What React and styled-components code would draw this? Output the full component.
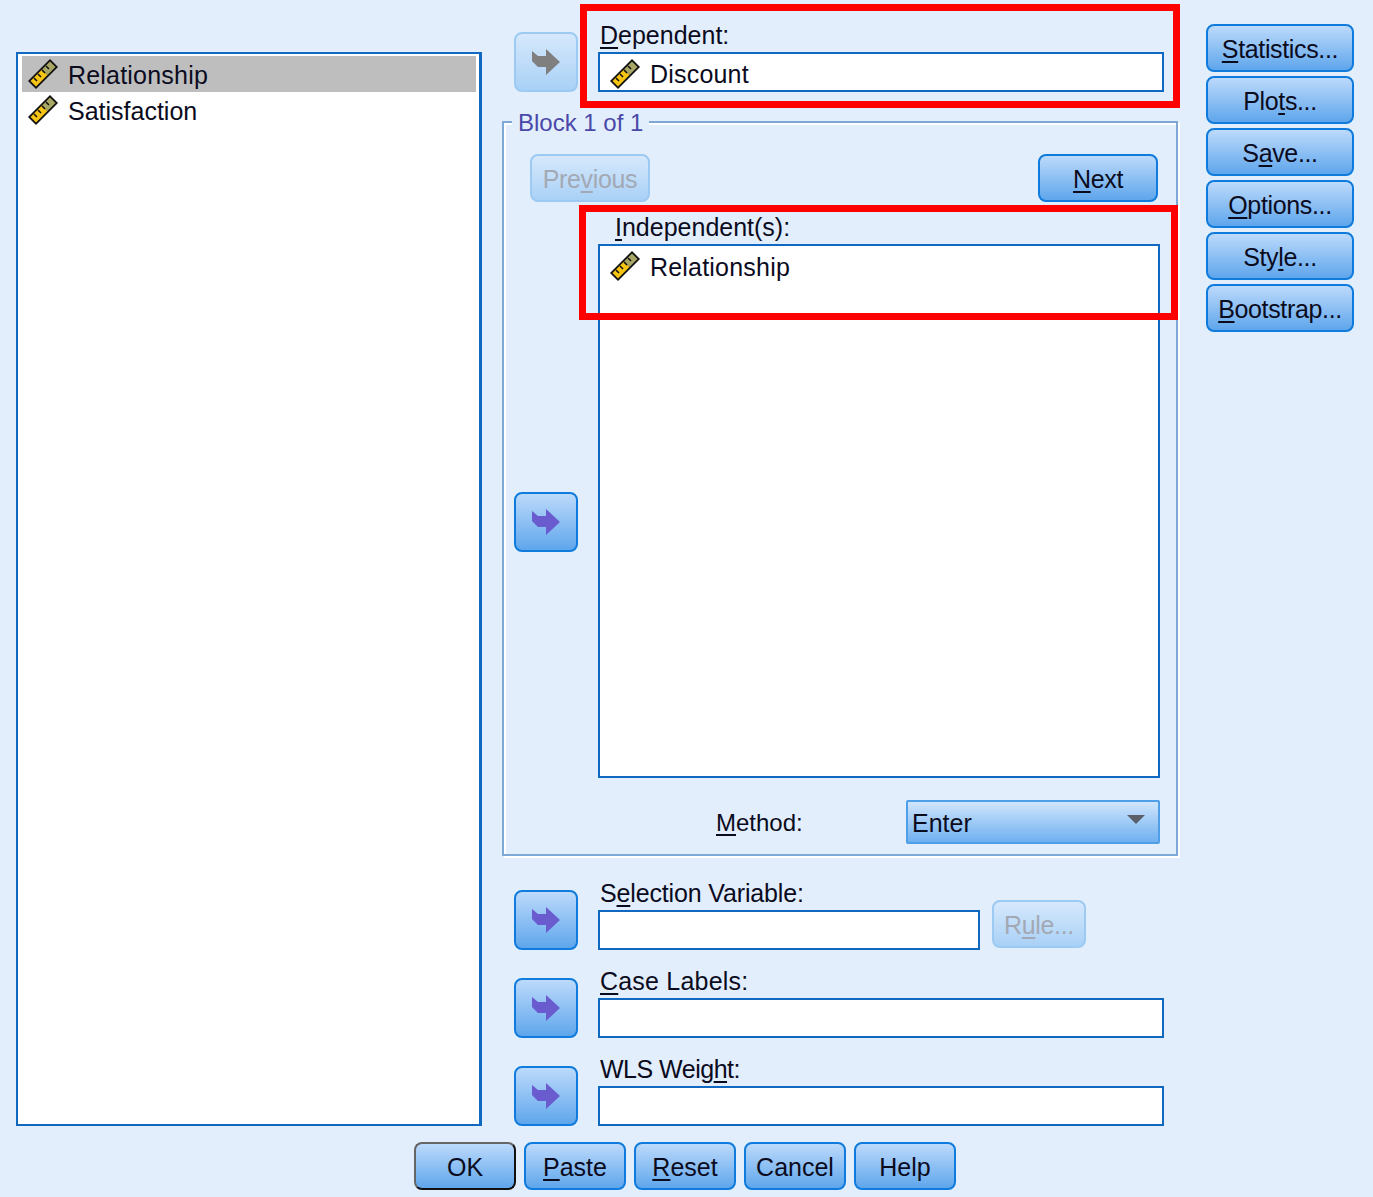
import React from "react";
import styled, { createGlobalStyle } from "styled-components";

const Global = createGlobalStyle`
  html, body { margin: 0; padding: 0; background: #e2eefb; }
  body { font-family: "Liberation Sans", Arial, sans-serif; font-size: 25px; color: #0b0b1e; }
`;

const Page = styled.div`
  position: relative;
  width: 1373px;
  height: 1197px;
  overflow: hidden;
  background: #e2eefb;
`;

const Top = styled.div`
  display: flex;
  align-items: flex-start;
  padding-left: 16px;
`;

const VarList = styled.div`
  box-sizing: border-box;
  width: 466px;
  height: 1074px;
  margin-top: 52px;
  padding: 2px 3px 2px 4px;
  background: #fff;
  border: 3px solid #1068c0;
  border-width: 2px 3px 2px 2px;
`;

const VarRow = styled.div`
  display: flex;
  align-items: center;
  gap: 8px;
  height: 36px;
  padding-left: 5px;
  background: ${({ selected }) => (selected ? "#bebebe" : "transparent")};
`;

const VarText = styled.span`
  position: relative;
  top: 1px;
  margin-left: 1px;
  letter-spacing: ${({ name }) => (name === "Satisfaction" ? "0" : "0.2px")};
`;

const Middle = styled.div`
  width: 676px;
  margin-left: 20px;
  padding-top: 24px;
`;

const FieldRow = styled.div`
  display: flex;
  align-items: flex-end;
  gap: 20px;
  height: 68px;
  padding-left: 12px;
  margin-top: ${({ top }) => top ?? 20}px;
`;

const Field = styled.div`
  width: ${({ width }) => width}px;
`;

const FieldLabel = styled.div`
  height: 28px;
  padding-left: 2px;
  line-height: 22px;
  white-space: nowrap;
  letter-spacing: ${({ spacing }) => spacing || 0}px;
`;

const Input = styled.div`
  box-sizing: border-box;
  display: flex;
  align-items: center;
  gap: 8px;
  height: 40px;
  padding: 3px 0 0 9px;
  background: #fff;
  border: 2px solid #1068c0;
`;

const ArrowButton = styled.div`
  box-sizing: border-box;
  flex: none;
  display: flex;
  align-items: center;
  justify-content: center;
  width: 64px;
  height: 60px;
  margin-top: ${({ top }) => top || 0}px;
  border-radius: 8px;
  border: 2px solid ${({ disabled }) => (disabled ? "#9ccaf2" : "#0f7bdc")};
  background: ${({ disabled }) =>
    disabled
      ? "linear-gradient(#d6e8fc, #a9d1f6)"
      : "linear-gradient(#bcdafb, #5fa6ec)"};
`;

const Group = styled.div`
  position: relative;
  box-sizing: border-box;
  height: 735px;
  margin-top: 29px;
  padding: 31px 16px 10px 10px;
  border: 2px solid #7ea8d6;
  box-shadow: inset 2px 2px 0 #fff, 2px 2px 0 #fff;
`;

const Legend = styled.div`
  position: absolute;
  left: 8px;
  top: -14px;
  padding: 0 6px;
  font-size: 24px;
  line-height: 28px;
  background: #e2eefb;
  color: #4a48a8;
`;

const NavRow = styled.div`
  display: flex;
  justify-content: space-between;
  padding: 0 2px 0 16px;
`;

const Button = styled.div`
  box-sizing: border-box;
  flex: none;
  display: flex;
  align-items: center;
  justify-content: center;
  width: ${({ width }) => width || 148}px;
  height: 48px;
  padding-top: 2px;
  border-radius: 8px;
  white-space: nowrap;
  letter-spacing: -0.35px;
  color: ${({ disabled }) => (disabled ? "#a3a9b4" : "inherit")};
  border: 2px solid ${({ disabled }) => (disabled ? "#9ccaf2" : "#0f7bdc")};
  border-color: ${({ primary }) => (primary ? "#666 #111 #111 #666" : "")};
  background: ${({ disabled }) =>
    disabled
      ? "linear-gradient(#d6e8fc, #a9d1f6)"
      : "linear-gradient(#bcdafb, #5fa6ec)"};
`;

const FooterButton = styled(Button)`
  width: 102px;
  letter-spacing: 0;
`;

const IndependentRow = styled.div`
  display: flex;
  gap: 20px;
`;

const Independent = styled.div`
  flex: 1;
`;

const IndependentLabel = styled.div`
  box-sizing: border-box;
  height: 42px;
  padding: 9px 0 0 17px;
  line-height: 32px;
`;

const IndependentBox = styled.div`
  box-sizing: border-box;
  height: 534px;
  padding-left: 9px;
  background: #fff;
  border: 2px solid #1068c0;
`;

const IndependentItem = styled.div`
  display: flex;
  align-items: center;
  gap: 8px;
  height: 40px;
`;

const MethodRow = styled.div`
  display: flex;
  align-items: center;
  margin-top: 22px;
  padding-left: 202px;
`;

const MethodLabel = styled.span`
  padding-top: 2px;
  font-size: 24px;
`;

const Dropdown = styled.div`
  box-sizing: border-box;
  display: flex;
  align-items: center;
  justify-content: space-between;
  width: 254px;
  height: 44px;
  margin-left: auto;
  padding: 2px 13px 0 4px;
  border: 2px solid #4f9fe8;
  border-radius: 2px;
  background: linear-gradient(#d0e5fc, #6fb0f0);
`;

const Caret = styled.span`
  width: 0;
  height: 0;
  margin-bottom: 8px;
  border-left: 9px solid transparent;
  border-right: 9px solid transparent;
  border-top: 9px solid #5a5f68;
`;

const SideButtons = styled.div`
  display: flex;
  flex-direction: column;
  gap: 4px;
  margin-left: 28px;
  padding-top: 24px;
`;

const Footer = styled.div`
  display: flex;
  gap: 8px;
  margin-top: 16px;
  padding-left: 414px;
`;

const RuleButton = styled(Button)`
  margin: 0 0 2px -8px;
`;

const Highlight = styled.div`
  position: absolute;
  box-sizing: border-box;
  left: ${({ x }) => x}px;
  top: ${({ y }) => y}px;
  width: ${({ w }) => w}px;
  height: ${({ h }) => h}px;
  border: 7px solid #ff0000;
  pointer-events: none;
`;

const Key = styled.span`
  text-decoration: underline;
  text-decoration-thickness: 2px;
  text-underline-offset: 3px;
`;

const RulerSvg = styled.svg`
  flex: none;
  width: 32px;
  height: 32px;
`;

function Ruler() {
  return (
    <RulerSvg viewBox="0 0 32 32">
      <polygon points="1,23 23,1 31,9 9,31" fill="#111" />
      <polygon points="3.5,23 15,11.5 20.5,17 9,28.5" fill="#f6c413" />
      <polygon points="15,11.5 23,3.5 28.5,9 20.5,17" fill="#a9a765" />
      <path
        d="M7 20l3 3M11 16l3 3M15 12l3 3M19 8l3 3"
        stroke="#111"
        strokeWidth="1.5"
      />
    </RulerSvg>
  );
}

function Arrow({ color = "#6a5ccf" }) {
  return (
    <svg width="28" height="26" viewBox="0 0 28 26">
      <polygon points="0,2 6,7 14,7 14,0 28,13 14,26 14,18 6,18 0,12" fill={color} />
    </svg>
  );
}

function Variable({ name }) {
  return (
    <>
      <Ruler />
      <VarText name={name}>{name}</VarText>
    </>
  );
}

export default function App() {
  return (
    <Page>
      <Global />
      <Top>
        <VarList>
          <VarRow selected>
            <Variable name="Relationship" />
          </VarRow>
          <VarRow>
            <Variable name="Satisfaction" />
          </VarRow>
        </VarList>

        <Middle>
          <FieldRow top={0}>
            <ArrowButton disabled>
              <Arrow color="#7f7f7f" />
            </ArrowButton>
            <Field width={566}>
              <FieldLabel>
                <Key>D</Key>ependent:
              </FieldLabel>
              <Input>
                <Variable name="Discount" />
              </Input>
            </Field>
          </FieldRow>

          <Group>
            <Legend>Block 1 of 1</Legend>
            <NavRow>
              <Button width={120} disabled>
                <span>
                  Pre<Key>v</Key>ious
                </span>
              </Button>
              <Button width={120}>
                <span>
                  <Key>N</Key>ext
                </span>
              </Button>
            </NavRow>
            <IndependentRow>
              <ArrowButton top={290}>
                <Arrow />
              </ArrowButton>
              <Independent>
                <IndependentLabel>
                  <Key>I</Key>ndependent(s):
                </IndependentLabel>
                <IndependentBox>
                  <IndependentItem>
                    <Variable name="Relationship" />
                  </IndependentItem>
                </IndependentBox>
              </Independent>
            </IndependentRow>
            <MethodRow>
              <MethodLabel>
                <Key>M</Key>ethod:
              </MethodLabel>
              <Dropdown>
                <span>Enter</span>
                <Caret />
              </Dropdown>
            </MethodRow>
          </Group>

          <FieldRow top={26}>
            <ArrowButton>
              <Arrow />
            </ArrowButton>
            <Field width={382}>
              <FieldLabel spacing={-0.15}>
                S<Key>e</Key>lection Variable:
              </FieldLabel>
              <Input />
            </Field>
            <RuleButton width={94} disabled>
              <span>
                R<Key>u</Key>le...
              </span>
            </RuleButton>
          </FieldRow>

          <FieldRow>
            <ArrowButton>
              <Arrow />
            </ArrowButton>
            <Field width={566}>
              <FieldLabel spacing={0.2}>
                <Key>C</Key>ase Labels:
              </FieldLabel>
              <Input />
            </Field>
          </FieldRow>

          <FieldRow>
            <ArrowButton>
              <Arrow />
            </ArrowButton>
            <Field width={566}>
              <FieldLabel spacing={-0.5}>
                WLS Weig<Key>h</Key>t:
              </FieldLabel>
              <Input />
            </Field>
          </FieldRow>
        </Middle>

        <SideButtons>
          <Button><span><Key>S</Key>tatistics...</span></Button>
          <Button><span>Plo<Key>t</Key>s...</span></Button>
          <Button><span>S<Key>a</Key>ve...</span></Button>
          <Button><span><Key>O</Key>ptions...</span></Button>
          <Button><span>Sty<Key>l</Key>e...</span></Button>
          <Button><span><Key>B</Key>ootstrap...</span></Button>
        </SideButtons>
      </Top>

      <Footer>
        <FooterButton primary>OK</FooterButton>
        <FooterButton><span><Key>P</Key>aste</span></FooterButton>
        <FooterButton><span><Key>R</Key>eset</span></FooterButton>
        <FooterButton>Cancel</FooterButton>
        <FooterButton>Help</FooterButton>
      </Footer>

      <Highlight x={580} y={4} w={600} h={104} />
      <Highlight x={579} y={205} w={599} h={115} />
    </Page>
  );
}
